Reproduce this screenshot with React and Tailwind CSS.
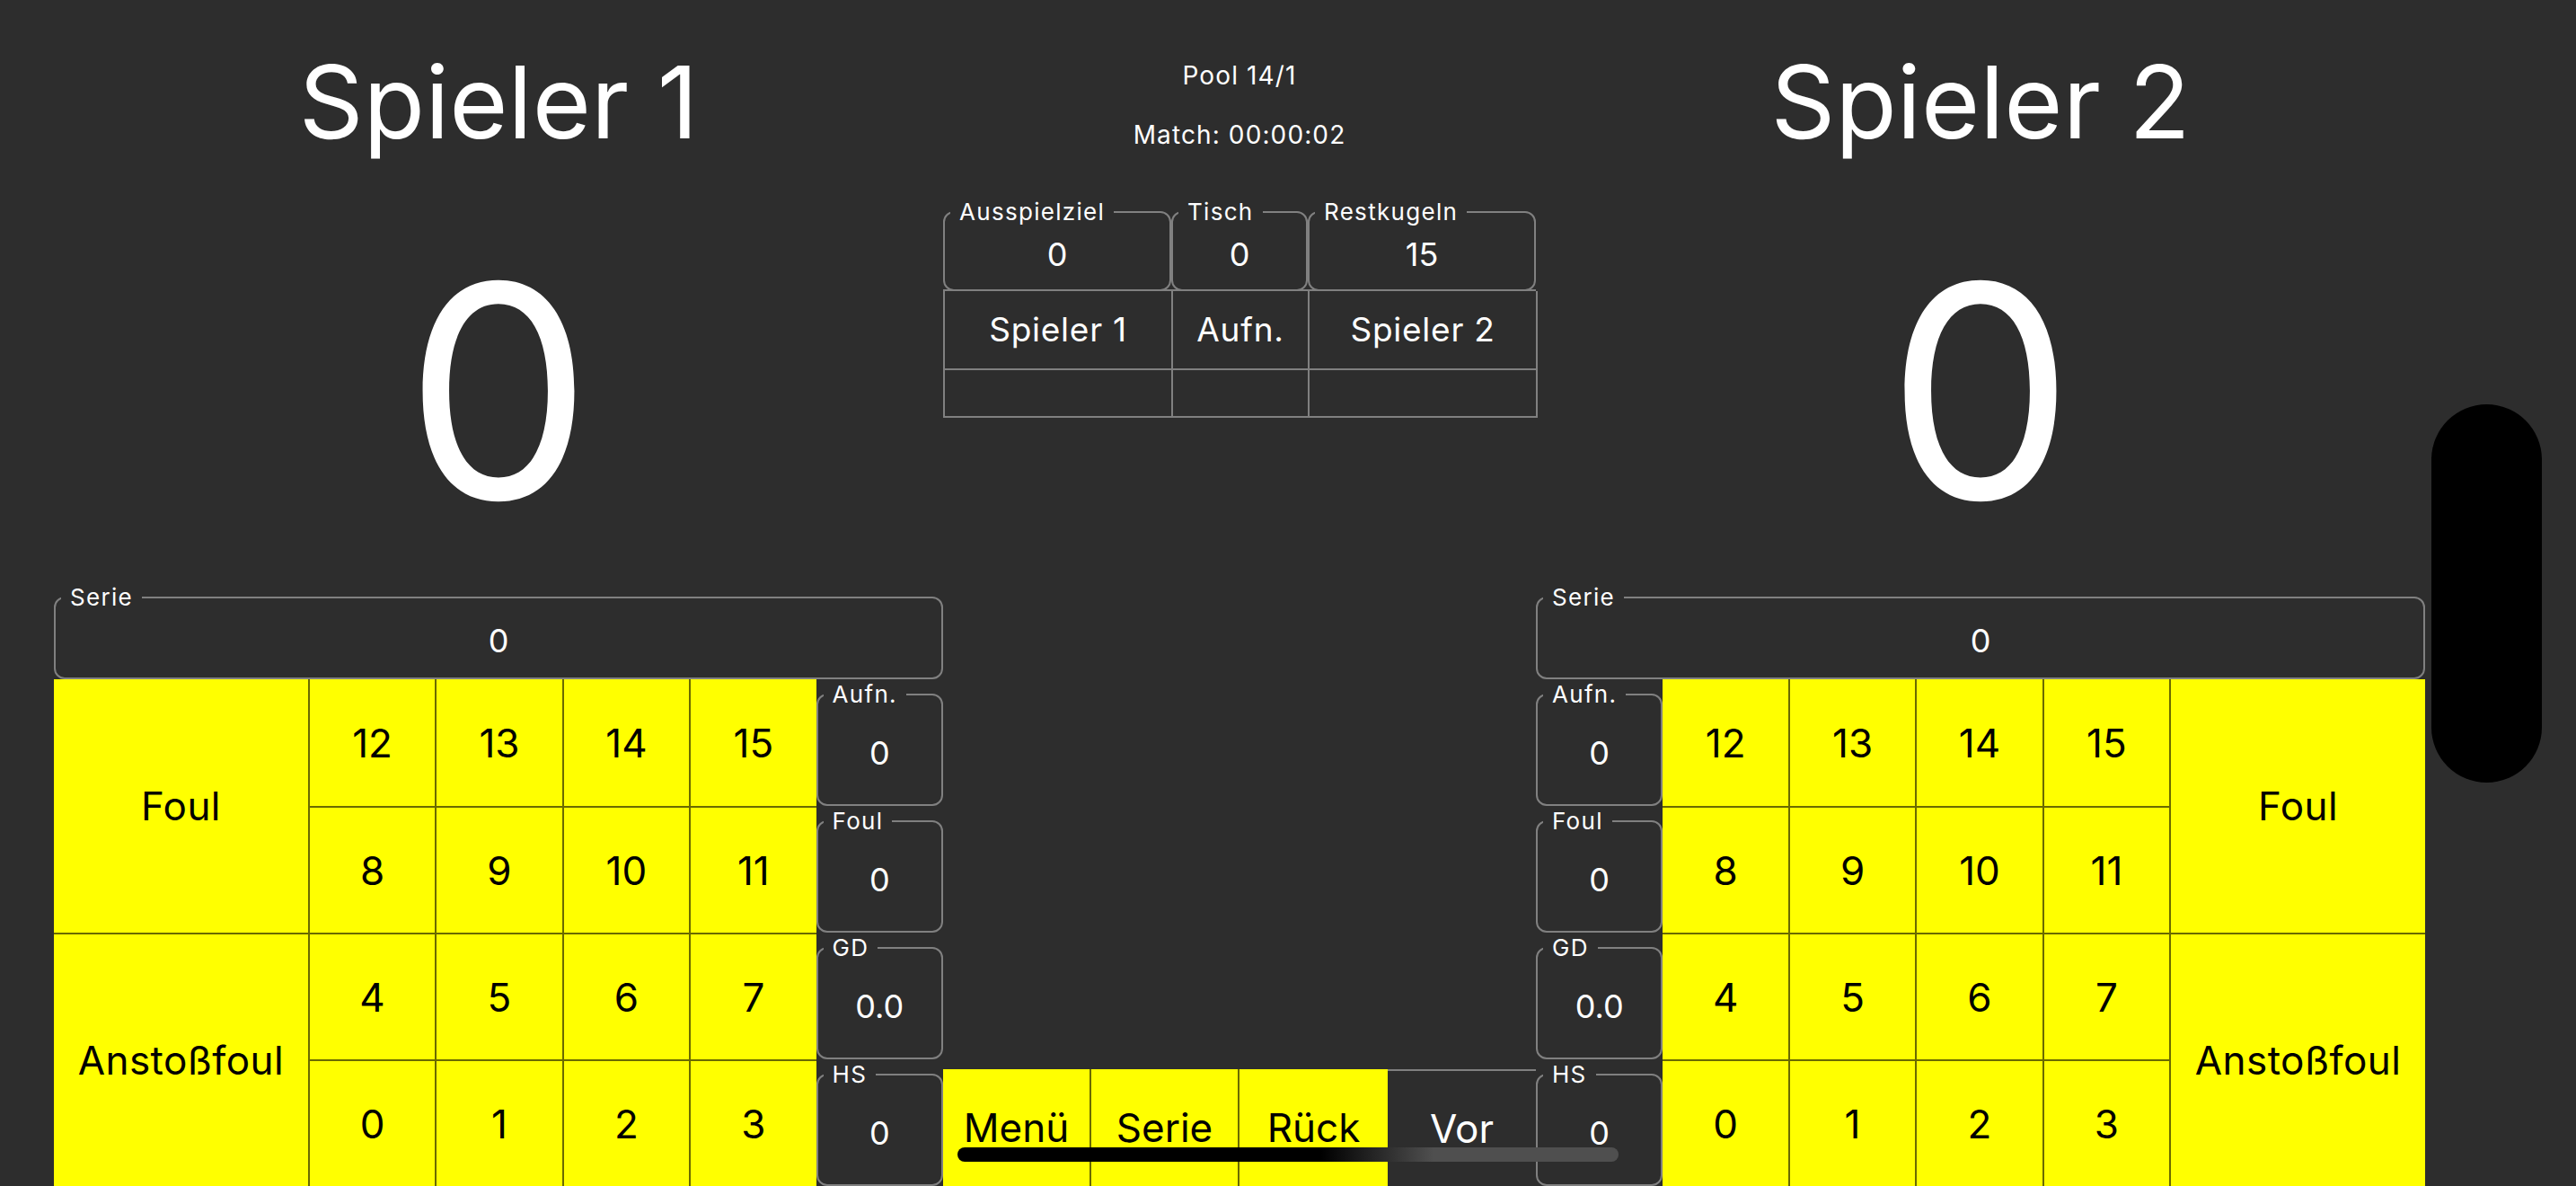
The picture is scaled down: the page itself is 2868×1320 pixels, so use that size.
import React from 'react';

const line = 'border-[#6a6a00]';

function Field({ label, value, className = '', bodyClass = '' }) {
  return (
    <fieldset className={`min-w-0 border-2 border-[#808080] rounded-[12px] ${className}`}>
      <legend className="ml-[6px] px-[10px] text-[26px] leading-[34px] tracking-[0.05em] text-white">
        {label}
      </legend>
      <div className={`flex items-center justify-center text-[36px] leading-none ${bodyClass}`}>
        {value}
      </div>
    </fieldset>
  );
}

function Num({ n, right, top }) {
  return (
    <div
      className={`bg-[#ffff00] text-black flex items-center justify-center text-[44px] ${line} ${
        right ? 'border-r-2' : 'border-l-2'
      } ${top ? 'border-t-2' : ''}`}
    >
      {n}
    </div>
  );
}

function Big({ label, top }) {
  return (
    <div
      className={`col-span-2 row-span-2 bg-[#ffff00] text-black flex items-center justify-center text-[44px] tracking-[0.01em] ${line} ${
        top ? 'border-t-2' : ''
      }`}
    >
      {label}
    </div>
  );
}

function Stat({ label, value }) {
  return <Field label={label} value={value} className="h-full" bodyClass="h-[96px]" />;
}

function PlayerPanel({ name, right }) {
  const rows = [
    [12, 13, 14, 15],
    [8, 9, 10, 11],
    [4, 5, 6, 7],
    [0, 1, 2, 3],
  ];
  const stats = [
    ['Aufn.', '0'],
    ['Foul', '0'],
    ['GD', '0.0'],
    ['HS', '0'],
  ];

  return (
    <div className="w-[990px] flex flex-col">
      <div className="pt-[57px] text-center text-[112px] leading-none">{name}</div>
      <div className="mt-[101px] text-center text-[330px] leading-none">0</div>
      <Field label="Serie" value="0" className="mt-[48px] h-[108px]" bodyClass="h-[62px]" />
      <div className="grid grid-cols-7 grid-rows-4 h-[564px]">
        {rows.map((r, i) => (
          <React.Fragment key={i}>
            {right && <Stat label={stats[i][0]} value={stats[i][1]} />}
            {!right && i === 0 && <Big label="Foul" />}
            {!right && i === 2 && <Big label="Anstoßfoul" top />}
            {r.map(n => (
              <Num key={n} n={n} right={right} top={i > 0} />
            ))}
            {right && i === 0 && <Big label="Foul" />}
            {right && i === 2 && <Big label="Anstoßfoul" top />}
            {!right && <Stat label={stats[i][0]} value={stats[i][1]} />}
          </React.Fragment>
        ))}
      </div>
    </div>
  );
}

function Middle() {
  return (
    <div className="w-[660px] flex flex-col">
      <div className="pt-[67px] text-center text-[28px] leading-[34px] tracking-[0.04em]">Pool 14/1</div>
      <div className="mt-[32px] text-center text-[28px] leading-[34px] tracking-[0.04em]">Match: 00:00:02</div>

      <div className="mt-[52px] flex">
        <Field label="Ausspielziel" value="0" className="w-[254px] h-[105px]" bodyClass="h-[60px]" />
        <Field label="Tisch" value="0" className="w-[152px] h-[105px]" bodyClass="h-[60px]" />
        <Field label="Restkugeln" value="15" className="w-[254px] h-[105px]" bodyClass="h-[60px]" />
      </div>

      <div className="-mt-[2px] grid grid-cols-[254px_152px_254px] border-t-2 border-l-2 border-[#808080] text-[37px] tracking-[0.02em]">
        <div className="h-[88px] border-r-2 border-b-2 border-[#808080] flex items-center justify-center">Spieler 1</div>
        <div className="h-[88px] border-r-2 border-b-2 border-[#808080] flex items-center justify-center">Aufn.</div>
        <div className="h-[88px] border-r-2 border-b-2 border-[#808080] flex items-center justify-center">Spieler 2</div>
        <div className="h-[53px] border-r-2 border-b-2 border-[#808080]" />
        <div className="h-[53px] border-r-2 border-b-2 border-[#808080]" />
        <div className="h-[53px] border-r-2 border-b-2 border-[#808080]" />
      </div>

      <div className="mt-auto flex h-[130px] text-[44px]">
        <div className={`w-[165px] bg-[#ffff00] text-black border-r-2 ${line} flex items-center justify-center`}>Menü</div>
        <div className={`w-[165px] bg-[#ffff00] text-black border-r-2 ${line} flex items-center justify-center`}>Serie</div>
        <div className="w-[165px] bg-[#ffff00] text-black flex items-center justify-center">Rück</div>
        <div className="w-[165px] border-t-2 border-[#808080] text-white flex items-center justify-center">Vor</div>
      </div>
    </div>
  );
}

export default function App() {
  return (
    <div className="relative w-[2868px] h-[1320px] overflow-hidden bg-[#2d2d2d] text-white font-['Inter',sans-serif] flex pl-[60px]">
      <PlayerPanel name="Spieler 1" />
      <Middle />
      <PlayerPanel name="Spieler 2" right />

      {/* dynamic island */}
      <div className="absolute left-[2707px] top-[450px] w-[123px] h-[421px] rounded-full bg-black" />
      {/* home indicator */}
      <div className="absolute left-[1066px] top-[1277px] w-[736px] h-[16px] rounded-full bg-[linear-gradient(to_right,#000_55%,#4f4f4f_72%)]" />
    </div>
  );
}
